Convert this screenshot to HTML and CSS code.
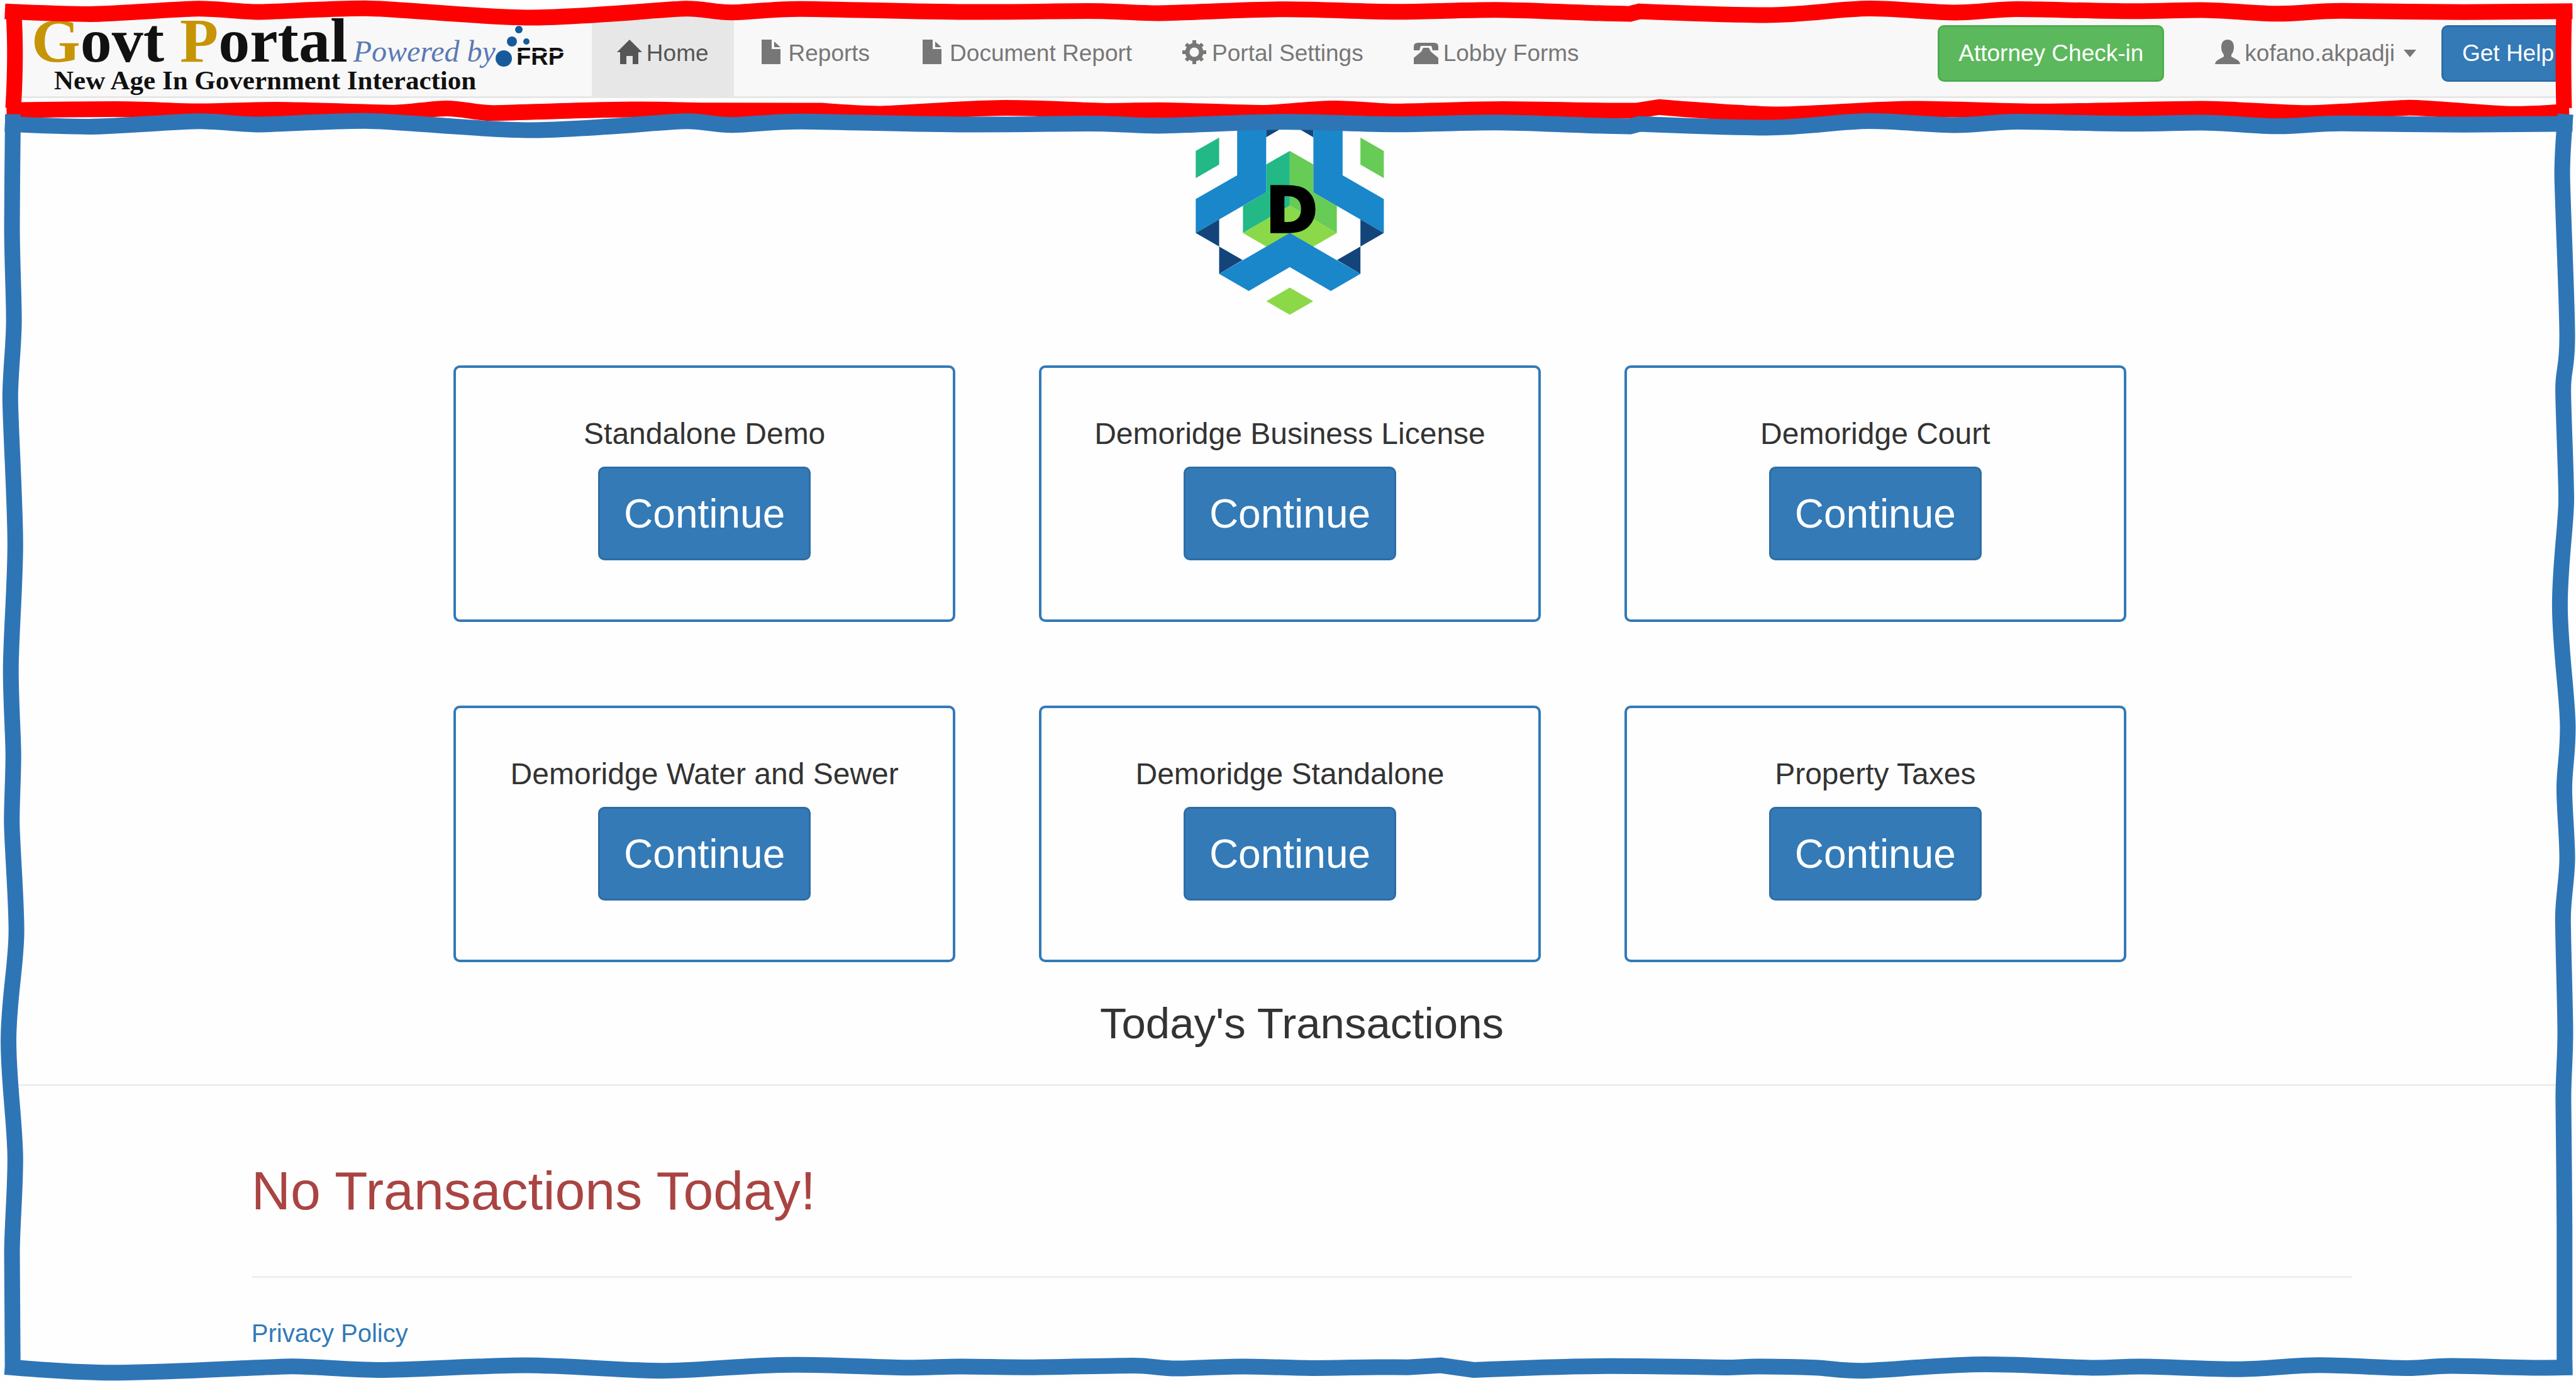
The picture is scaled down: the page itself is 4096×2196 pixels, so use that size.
FILE: index.html
```html
<!DOCTYPE html>
<html lang="en">
<head>
<meta charset="utf-8">
<title>Govt Portal</title>
<link rel="stylesheet" href="styles.css">
</head>
<body>
<div class="page">
  <header class="navbar">
    <a class="brand" href="#">
      <span class="brand-row">
        <span class="brand-name"><span class="gold">G</span>ovt <span class="gold">P</span>ortal</span>
        <span class="brand-by">Powered by</span>
        <svg class="brand-mark" viewBox="0 0 110 72" role="img" aria-label="FRP">
          <g fill="#175a9c">
            <circle cx="13" cy="52" r="13"/><circle cx="26" cy="25" r="8"/>
            <circle cx="37" cy="6" r="6"/><circle cx="49" cy="25" r="5"/>
          </g>
          <text class="mark-text" x="33" y="62">FRP</text>
          <path d="M34 42H108" stroke="#f8f8f8" stroke-width="2"/>
        </svg>
      </span>
      <span class="brand-tag">New Age In Government Interaction</span>
    </a>
    <nav class="links">
      <a class="link active" href="#"><svg class="icon" viewBox="0 0 37 44"><path d="M20 0L40 20H34V39H25V26H15V39H5V20H0z"/></svg>Home</a>
      <a class="link" href="#"><svg class="icon" viewBox="0 0 37 44"><path d="M4 0H20V15H34V39H4zM24 3L34 12H24z"/></svg>Reports</a>
      <a class="link" href="#"><svg class="icon" viewBox="0 0 37 44"><path d="M4 0H20V15H34V39H4zM24 3L34 12H24z"/></svg>Document Report</a>
      <a class="link" href="#"><svg class="icon" viewBox="0 0 37 44"><g fill="none" stroke="currentColor"><circle cx="19" cy="20" r="11" stroke-width="7"/><path stroke-width="6" d="M19 1V8M19 32V39M0 20H7M31 20H38M6 7L11 12M27 28L32 33M32 7L27 12M11 28L6 33"/></g></svg>Portal Settings</a>
      <a class="link" href="#"><svg class="icon" viewBox="0 0 37 44"><path d="M0 17V11q0-6 7-6h25q7 0 7 6v6h-9l-2-7H11l-2 7zM15 13h9l3 6 12 10V39H0V29L12 19z"/></svg>Lobby Forms</a>
    </nav>
    <div class="account">
      <button class="btn btn-green" type="button">Attorney Check-in</button>
      <button class="link user" type="button"><svg class="icon" viewBox="0 0 37 44"><path d="M20 0c7 0 10 5 10 12 0 6-2 9-4 12v3c6 4 13 5 14 12H0c1-7 8-8 14-12v-3c-2-3-4-6-4-12C10 5 13 0 20 0z"/></svg>kofano.akpadji<span class="caret"></span></button>
      <button class="btn btn-help" type="button">Get Help</button>
    </div>
  </header>

  <main>
    <svg class="logo" viewBox="125 30 975 1000" role="img" aria-label="D">
      <g fill="#13457a">
        <path d="M490 30H734V112L612 40 490 112z"/>
        <path d="M126 606L247 536V676zM247 676L368 746 247 818z"/>
        <path d="M1098 606L977 536V676zM977 676L856 746 977 818z"/>
      </g>
      <path fill="#fefefe" d="M490 112L612 42 734 112V260H490z"/>
      <path fill="#22b986" d="M612 182V466L370 606V466L490 396V252zM126 182L247 113V253L126 323z"/>
      <path fill="#67cc55" d="M612 182L734 252V396L855 466V606L612 466zM1098 182L977 113V253L1098 323z"/>
      <path fill="#8bd849" d="M612 466L855 606 734 676H490L370 606zM612 888L733 959 612 1029 491 959z"/>
      <g fill="#1987ca">
        <path d="M340 30H490V396L126 606V431L340 308z"/>
        <path d="M885 30H734V396L1098 606V431L885 308z"/>
        <path d="M612 606L977 818 824 906 612 783 400 906 247 818z"/>
      </g>
      <text class="logo-letter" x="488" y="600">D</text>
    </svg>

    <section class="cards">
      <article class="card"><h2>Standalone Demo</h2><button class="btn btn-large" type="button">Continue</button></article>
      <article class="card"><h2>Demoridge Business License</h2><button class="btn btn-large" type="button">Continue</button></article>
      <article class="card"><h2>Demoridge Court</h2><button class="btn btn-large" type="button">Continue</button></article>
      <article class="card"><h2>Demoridge Water and Sewer</h2><button class="btn btn-large" type="button">Continue</button></article>
      <article class="card"><h2>Demoridge Standalone</h2><button class="btn btn-large" type="button">Continue</button></article>
      <article class="card"><h2>Property Taxes</h2><button class="btn btn-large" type="button">Continue</button></article>
    </section>

    <h1 class="today">Today's Transactions</h1>
    <hr>
    <div class="container">
      <p class="empty">No Transactions Today!</p>
      <hr>
      <footer><a href="#">Privacy Policy</a></footer>
    </div>
  </main>

  <svg class="frame" viewBox="0 0 4096 2196" preserveAspectRatio="none" aria-hidden="true">
    <defs>
      <path id="wave" d="M3 59S40 73 55 73 109 45 121 45 147 62 157 62 202 43 222 43 292 91 323 91 407 45 418 45 435 64 445 64 470 46 487 46 560 62 595 62 642 57 662 57 690 68 705 68 760 48 783 48 828 61 850 61 888 51 910 51 960 68 992 72L998 59S1050 78 1075 78 1120 44 1138 44 1175 65 1190 65 1214 47 1228 47 1278 58 1298 58 1325 52 1340 52 1373 71 1387 71 1410 56 1425 56 1480 63 1500 63L1566 58"/>
    </defs>
    <g class="red">
      <path d="M22 24Q26 90 21 172M4077 24Q4075 90 4077 172"/>
      <use href="#wave" transform="scale(2.612 .3073)"/>
      <path transform="scale(2.612 .3073)" d="M4 570S50 565 70 565 106 576 121 576 153 568 168 568 230 583 240 583 262 561 272 561 290 585 300 585 360 566 385 566 415 572 430 572L500 573S525 589 535 589 588 558 612 558 665 574 675 574 695 570 705 570 755 584 768 584 798 561 812 561 838 577 850 577 895 565 915 565 960 573 996 573L1010 554S1062 592 1083 592 1140 563 1165 563 1220 577 1242 577 1318 563 1340 563 1388 585 1404 585 1455 560 1466 557 1515 590 1530 590 1552 582 1564 578"/>
    </g>
    <g class="blue">
      <path transform="translate(0 166) scale(.3073 1.295)" d="M67 12S62 110 62 150 72 235 72 265 53 330 53 360 79 490 79 540 56 655 56 695 69 775 69 800 61 855 61 880 85 975 85 1015 44 1100 44 1150 79 1255 79 1295 62 1380 62 1410L66 1560"/>
      <path transform="translate(4004 166) scale(.3073 1.295)" d="M245 12S228 60 228 85 254 245 254 285 233 325 233 350 249 455 249 485 216 565 216 615 257 730 257 765 239 815 239 840 254 900 254 925 232 975 232 1000 244 1110 244 1140 234 1195 234 1220 240 1340 240 1380L240 1560"/>
      <use href="#wave" transform="translate(0 179) scale(2.612 .3073)"/>
      <path transform="translate(0 2141) scale(2.612 .3073)" d="M3 105S40 136 70 136 165 103 178 103 214 122 232 122 295 98 320 98 381 126 403 126 455 95 483 95 538 110 552 110 574 104 585 104 612 108 625 108 679 99 690 99 706 114 716 114 743 104 757 104 788 112 800 112 830 107 838 107 850 108 857 108L877 98 897 122S950 102 980 102 1046 109 1052 109 1062 104 1072 104 1095 106 1105 110 1120 126 1133 126 1182 93 1208 93 1262 111 1275 111 1290 104 1303 104 1345 118 1362 118 1395 97 1412 97 1453 112 1465 112 1480 101 1492 101 1535 111 1550 111L1566 108"/>
    </g>
  </svg>
</div>
</body>
</html>
```
FILE: styles.css
```css
* { box-sizing: border-box; }

body {
  margin: 0;
  background: #fefefe;
  color: #333;
  font: 37px/40px "Liberation Sans", Arial, sans-serif;
}

.page {
  position: relative;
  min-height: 100vh;
  padding: 16px 18px 0 24px;
}

/* Navigation bar */
.navbar {
  display: flex;
  height: 140px;
  background: #f8f8f8;
  border-bottom: 3px solid #e7e7e7;
}

.brand {
  flex: none;
  padding-left: 26px;
  margin-right: 43px;
  color: #111;
  font-family: "Liberation Serif", "Times New Roman", serif;
  text-decoration: none;
  white-space: nowrap;
}

.brand-row {
  display: flex;
  align-items: baseline;
  height: 97px;
}

.brand-name {
  margin-right: 9px;
  font-size: 100px;
  font-weight: bold;
  line-height: 97px;
}

.gold { color: #c69405; }

.brand-by {
  color: #5a7ab4;
  font-size: 48px;
  font-style: italic;
}

.brand-mark {
  align-self: flex-start;
  width: 110px;
  height: 72px;
  margin-top: 25px;
}

.mark-text {
  font: bold 38px "Liberation Sans", Arial, sans-serif;
  fill: #111;
}

.brand-tag {
  display: block;
  padding-left: 36px;
  font-size: 43px;
  font-weight: bold;
  line-height: 30px;
}

.links, .account { display: flex; }

.account {
  align-items: center;
  margin-left: auto;
}

.link {
  display: flex;
  align-items: center;
  gap: 10px;
  padding: 0 40px;
  border: 0;
  background: none;
  color: #777;
  font: inherit;
  text-decoration: none;
  white-space: nowrap;
}

.active {
  background: #e7e7e7;
  color: #555;
}

.icon {
  width: 37px;
  height: 44px;
  overflow: visible;
  fill: currentColor;
}

.caret {
  margin-left: 4px;
  border: 10px solid transparent;
  border-top: 12px solid #777;
  border-bottom: 0;
}

.btn {
  height: 90px;
  padding: 0 30px;
  border: 3px solid #2e6da4;
  border-radius: 10px;
  background: #337ab7;
  color: #fff;
  font: inherit;
  white-space: nowrap;
}

.btn-green {
  margin-right: 41px;
  border-color: #4cae4c;
  background: #5cb85c;
}

.btn-help { padding-right: 14px; }

/* Dashboard */
.logo {
  display: block;
  width: 300px;
  height: 308px;
  margin: 37px auto 80px;
}

.logo-letter {
  font: bold 322px "DejaVu Sans", sans-serif;
  stroke: #000;
  stroke-width: 12px;
}

.cards {
  display: grid;
  grid-template-columns: repeat(3, 1fr);
  gap: 133px;
  width: 65.6%;
  margin: 0 auto;
}

.card {
  display: flex;
  flex-direction: column;
  align-items: center;
  padding: 79px 20px 94px;
  border: 4px solid #337ab7;
  border-radius: 10px;
}

.card h2 {
  margin: 0 0 26px;
  font-size: 48px;
  font-weight: normal;
  line-height: 52px;
}

.btn-large {
  height: 149px;
  padding: 0 38px;
  font-size: 64px;
}

.today {
  margin: 60px 0 58px;
  padding-left: 38px;
  font-size: 69px;
  font-weight: normal;
  line-height: 76px;
  text-align: center;
}

hr {
  height: 3px;
  margin: 0;
  border: 0;
  background: #eee;
}

.container { padding: 0 8.34% 0 9.27%; }

.empty {
  margin: 118px 0 88px;
  color: #a94442;
  font-size: 86px;
  line-height: 96px;
}

footer {
  padding: 66px 0 54px;
  font-size: 40px;
  line-height: 44px;
}

footer a {
  color: #337ab7;
  text-decoration: none;
}

/* Hand-drawn frame laid over the page */
.frame {
  position: absolute;
  inset: 0;
  width: 100%;
  height: 100%;
  pointer-events: none;
}

.frame path {
  fill: none;
  stroke-width: 25px;
  vector-effect: non-scaling-stroke;
}

.red { stroke: #f00; }
.blue { stroke: #2e75b6; }
```
